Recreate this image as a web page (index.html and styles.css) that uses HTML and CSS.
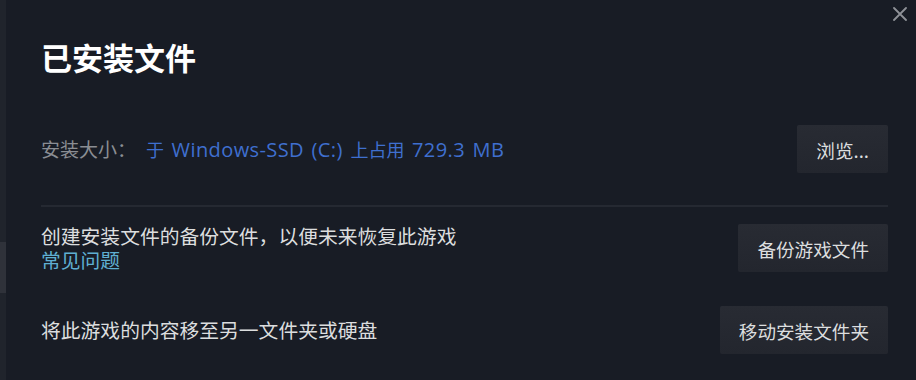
FILE: index.html
```html
<!DOCTYPE html>
<html lang="zh-CN">
<head>
<meta charset="utf-8">
<title>已安装文件</title>
<link rel="stylesheet" href="styles.css">
</head>
<body>
<div class="page">
  <div class="edge"><div class="edge-thumb"></div></div>
  <main class="dialog">
    <button class="close" aria-label="关闭">
      <svg width="14" height="14" viewBox="0 0 14 14"><path d="M1 1 L13 13 M13 1 L1 13" stroke="currentColor" stroke-width="1.8" fill="none" stroke-linecap="round"/></svg>
    </button>
    <h1 class="title">已安装文件</h1>
    <section class="row row-size">
      <div class="size-info">
        <span class="label">安装大小：</span>
        <span class="size-value"><span class="cjk">于</span> Windows-SSD (C:) <span class="cjk">上占用</span> 729.3 MB</span>
      </div>
      <button class="btn">浏览...</button>
    </section>
    <hr class="divider">
    <section class="row row-backup">
      <div class="desc">
        <div class="desc-line">创建安装文件的备份文件，以便未来恢复此游戏</div>
        <a class="link" href="#">常见问题</a>
      </div>
      <button class="btn">备份游戏文件</button>
    </section>
    <section class="row row-move">
      <div class="desc">将此游戏的内容移至另一文件夹或硬盘</div>
      <button class="btn">移动安装文件夹</button>
    </section>
  </main>
</div>
</body>
</html>
```
FILE: styles.css
```css
html, body {
  margin: 0;
  padding: 0;
  background: #181c25;
  height: 100%;
  overflow: hidden;
}
body {
  font-family: "Noto Sans CJK SC", "Noto Sans", sans-serif;
  color: #dcdedf;
}
.page {
  display: flex;
  height: 380px;
}
.edge {
  width: 6px;
  flex: none;
  background: #20242c;
  padding-top: 242px;
  box-sizing: border-box;
}
.edge-thumb {
  height: 51px;
  background: #2f323a;
}
.dialog {
  position: relative;
  flex: 1;
  padding: 39px 28px 0 35px;
  display: flex;
  flex-direction: column;
}
.close {
  position: absolute;
  top: 6px;
  right: 8px;
  width: 16px;
  height: 16px;
  padding: 1px;
  border: 0;
  background: none;
  color: #8e9197;
  display: flex;
  align-items: center;
  justify-content: center;
}
.title {
  margin: 0;
  font-size: 31px;
  line-height: 36px;
  font-weight: 700;
  color: #ffffff;
  letter-spacing: 0;
}
.row {
  display: flex;
  align-items: center;
  justify-content: space-between;
}
.row-size {
  margin-top: 50px;
}
.size-info {
  font-size: 19px;
  line-height: 24px;
  display: flex;
  align-items: center;
}
.label {
  color: #8a8d93;
  margin-right: 10px;
}
.size-value {
  color: #3f6fcf;
  font-family: "Open Sans", "Noto Sans CJK SC", sans-serif;
  font-size: 20px;
  letter-spacing: 0.4px;
  word-spacing: 2px;
}
.cjk {
  font-family: "Noto Sans CJK SC", sans-serif;
  font-size: 18px;
  letter-spacing: 0;
}
.divider {
  border: 0;
  height: 2px;
  background: #252932;
  margin: 32px 0 0 0;
}
.row-backup {
  margin-top: 17px;
}
.row-move {
  margin-top: 34px;
}
.desc {
  font-size: 19.8px;
  line-height: 24px;
  color: #dcdedf;
}
.desc-line {
  height: 24px;
}
.link {
  color: #5fafd2;
  text-decoration: none;
  display: block;
  height: 24px;
}
.btn {
  height: 48px;
  padding: 0 19px;
  border: 0;
  border-radius: 2px;
  background: linear-gradient(180deg, #282b33 0%, #23262e 100%);
  color: #dcdedf;
  font-family: "Noto Sans CJK SC", "Noto Sans", sans-serif;
  font-size: 18.6px;
  white-space: nowrap;
}
```
